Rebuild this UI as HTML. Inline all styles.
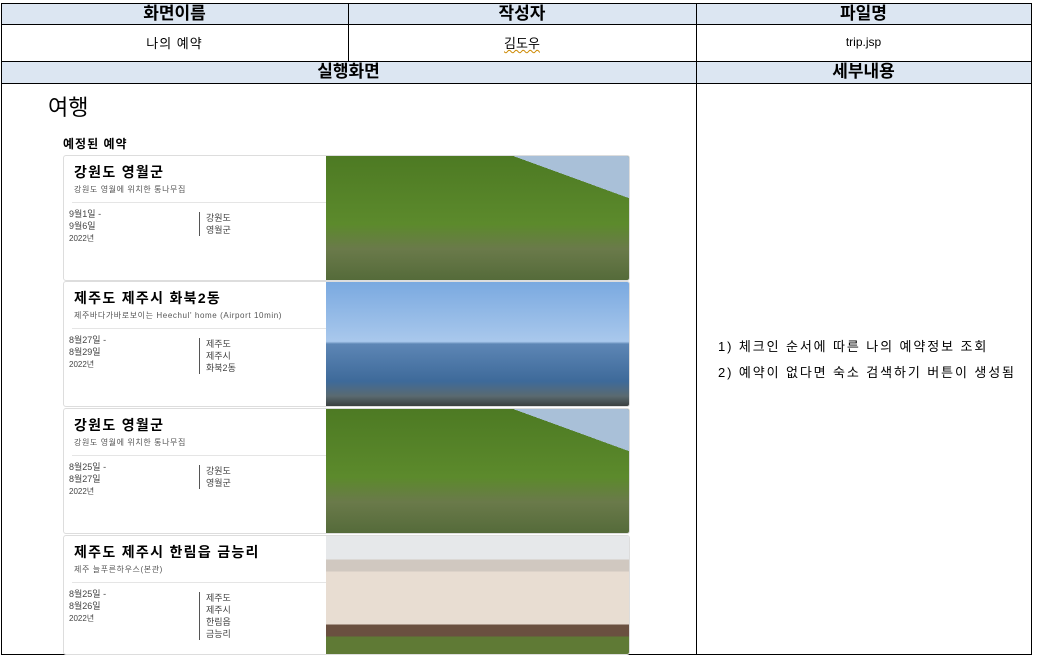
<!DOCTYPE html><html><head><meta charset="utf-8"><style>
body{margin:0;width:1047px;height:656px;background:#fff;position:relative;overflow:hidden;font-family:"Liberation Sans","Noto Sans CJK KR",sans-serif;color:#000}
.a{position:absolute}
.h{background:#dce6f2;text-align:center;font-size:17px;font-weight:bold}
.c{text-align:center;font-size:13px}
.ln{position:absolute;background:#000}
.card{position:absolute;left:63px;width:565px;height:124px;border:1px solid #ddd;border-radius:3px;background:#fff;overflow:hidden}
.card .t{position:absolute;left:10px;top:6px;font-size:14px;font-weight:bold;letter-spacing:1.3px}
.card .s{position:absolute;left:10px;top:28px;font-size:8px;color:#555;letter-spacing:0.6px}
.card .hr{position:absolute;left:8px;top:46px;width:255px;height:1px;background:#e5e5e5}
.card .d{position:absolute;left:5px;top:52px;font-size:9px;line-height:12px;color:#444}
.card .y{font-size:8px}
.card .l{position:absolute;left:135px;top:56px;font-size:9px;line-height:12px;color:#444;border-left:1px solid #555;padding-left:6px}
.card .im{position:absolute;left:262px;top:0;width:303px;height:124px}
.mt{background:linear-gradient(200deg,#a9c0d8 0 18%,transparent 18%),linear-gradient(180deg,#4d7a23,#5c8a2c 55%,#6a7a4a 75%,#556b3a)}
.sea{background:linear-gradient(180deg,#7aa9e0 0,#a9c8ec 48%,#5d86b5 50%,#3e6a9a 80%,#5a6a70 92%,#3a4040)}
.hs{background:linear-gradient(180deg,#e6e8ea 0 20%,#d0c8c0 20% 30%,#e8ddd2 30% 75%,#6a5040 75% 85%,#5f7a35 85%)}
</style></head><body>
<div class="a h" style="left:1px;top:3px;width:347px;height:21px;line-height:21px">화면이름</div>
<div class="a h" style="left:348px;top:3px;width:348px;height:21px;line-height:21px">작성자</div>
<div class="a h" style="left:696px;top:3px;width:335px;height:21px;line-height:21px">파일명</div>
<div class="a c" style="left:1px;top:33px;width:347px;letter-spacing:1px">나의 예약</div>
<div class="a c" style="left:348px;top:33px;width:348px"><span style="text-decoration:underline wavy #c80;text-decoration-thickness:1px">김도우</span></div>
<div class="a c" style="left:696px;top:35px;width:335px;font-size:12px">trip.jsp</div>
<div class="a h" style="left:1px;top:61px;width:695px;height:22px;line-height:22px">실행화면</div>
<div class="a h" style="left:696px;top:61px;width:335px;height:22px;line-height:22px">세부내용</div>
<div class="ln" style="left:1px;top:3px;width:1031px;height:1px"></div>
<div class="ln" style="left:1px;top:24px;width:1031px;height:1px"></div>
<div class="ln" style="left:1px;top:61px;width:1031px;height:1px"></div>
<div class="ln" style="left:1px;top:83px;width:1031px;height:1px"></div>
<div class="ln" style="left:1px;top:654px;width:1031px;height:1px"></div>
<div class="ln" style="left:1px;top:3px;width:1px;height:652px"></div>
<div class="ln" style="left:348px;top:3px;width:1px;height:58px"></div>
<div class="ln" style="left:696px;top:3px;width:1px;height:652px"></div>
<div class="ln" style="left:1031px;top:3px;width:1px;height:652px"></div>
<div class="a" style="left:48px;top:90px;font-size:22px">여행</div>
<div class="a" style="left:63px;top:135px;font-size:12px;font-weight:bold;letter-spacing:1px">예정된 예약</div>
<div class="card" style="top:155px"><div class="t">강원도 영월군</div><div class="s">강원도 영월에 위치한 통나무집</div><div class="hr"></div><div class="d">9월1일 -<br>9월6일<br><span class="y">2022년</span></div><div class="l">강원도<br>영월군</div><div class="im mt"></div></div>
<div class="card" style="top:281px"><div class="t">제주도 제주시 화북2동</div><div class="s">제주바다가바로보이는 Heechul' home (Airport 10min)</div><div class="hr"></div><div class="d">8월27일 -<br>8월29일<br><span class="y">2022년</span></div><div class="l">제주도<br>제주시<br>화북2동</div><div class="im sea"></div></div>
<div class="card" style="top:408px"><div class="t">강원도 영월군</div><div class="s">강원도 영월에 위치한 통나무집</div><div class="hr"></div><div class="d">8월25일 -<br>8월27일<br><span class="y">2022년</span></div><div class="l">강원도<br>영월군</div><div class="im mt"></div></div>
<div class="card" style="top:535px;height:118px"><div class="t">제주도 제주시 한림읍 금능리</div><div class="s">제주 늘푸른하우스(본관)</div><div class="hr"></div><div class="d">8월25일 -<br>8월26일<br><span class="y">2022년</span></div><div class="l">제주도<br>제주시<br>한림읍<br>금능리</div><div class="im hs" style="height:118px"></div></div>
<div class="a" style="left:718px;top:334px;font-size:13px;line-height:26px;letter-spacing:1.9px">1) 체크인 순서에 따른 나의 예약정보 조회<br>2) 예약이 없다면 숙소 검색하기 버튼이 생성됨</div>
</body></html>
